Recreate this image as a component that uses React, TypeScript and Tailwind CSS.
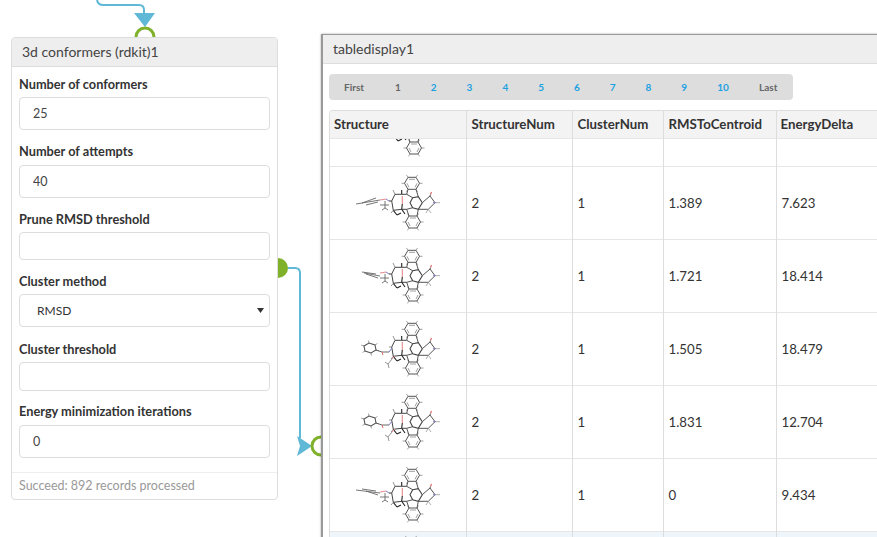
const fields = [
  { label: 'Number of conformers', value: '25', box: 'mt-[3px] h-[33px]', gap: 'mt-0' },
  { label: 'Number of attempts', value: '40', box: 'mt-[4px] h-[33px]', gap: 'mt-[11px]' },
  { label: 'Prune RMSD threshold', value: '', box: 'mt-[3px] h-[28px]', gap: 'mt-[11px]' },
];
const fieldsAfter = [
  { label: 'Cluster threshold', value: '', box: 'mt-[3px] h-[29px]', gap: 'mt-[12px]' },
  { label: 'Energy minimization iterations', value: '0', box: 'mt-[4px] h-[33px]', gap: 'mt-[10px]' },
];
const pages = ['1', '2', '3', '4', '5', '6', '7', '8', '9'];
const rows = [
  { rms: '1.389', delta: '7.623', tail: 'edge' },
  { rms: '1.721', delta: '18.414', tail: 'edgeUp' },
  { rms: '1.505', delta: '18.479', tail: 'ring' },
  { rms: '1.831', delta: '12.704', tail: 'ringLow' },
  { rms: '0', delta: '9.434', tail: 'flat' },
];

function Benzene({ x, y }: { x: number; y: number }) {
  const pts = [[-4, -6], [4, -6], [7.5, 0], [4, 6], [-4, 6], [-7.5, 0]];
  const d = pts.map((p, i) => `${i ? 'L' : 'M'}${x + p[0]} ${y + p[1]}`).join(' ') + ' Z';
  const h = pts.map(p => `M${x + p[0]} ${y + p[1]} L${x + p[0] * 1.4} ${y + p[1] * 1.4}`).join(' ');
  return (
    <g>
      <path d={h} stroke="#8c8c8c" strokeWidth="0.8" fill="none" />
      <path d={d} stroke="#555" strokeWidth="1" fill="none" />
      <path d={`M${x - 3} ${y - 4} L${x + 3} ${y - 4} M${x + 5} ${y} L${x + 3} ${y + 4} M${x - 5} ${y} L${x - 3} ${y + 4}`} stroke="#777" strokeWidth="0.7" fill="none" />
    </g>
  );
}

function SmallRing({ x, y }: { x: number; y: number }) {
  const pts = [[-6, -2], [-1, -5], [5, -3], [6, 2], [1, 5], [-5, 3]];
  const d = pts.map((p, i) => `${i ? 'L' : 'M'}${x + p[0]} ${y + p[1]}`).join(' ') + ' Z';
  const h = pts.map(p => `M${x + p[0]} ${y + p[1]} L${x + p[0] * 1.5} ${y + p[1] * 1.5}`).join(' ');
  return (
    <g>
      <path d={h} stroke="#8c8c8c" strokeWidth="0.8" fill="none" />
      <path d={d} stroke="#555" strokeWidth="1.1" fill="none" />
    </g>
  );
}

function Tail({ kind }: { kind: string }) {
  if (kind === 'ring' || kind === 'ringLow') {
    return (
      <g>
        <SmallRing x={-28} y={-2} />
        <path d="M-22 0 L-16 2 L-9 2" stroke="#555" strokeWidth="0.9" fill="none" />
        <path d="M-16 2 L-15 5" stroke="#e06a6a" strokeWidth="1" fill="none" />
        <path d="M-9 2 L-6 -2" stroke="#7c7cc8" strokeWidth="1" fill="none" />
        <path d="M-6 9 L-10 14 M-10 14 L-13 12 M-10 14 L-9 18" stroke="#777" strokeWidth="0.8" fill="none" />
        <path d="M-3 6 L-6 9" stroke="#e58a8a" strokeWidth="1" fill="none" />
      </g>
    );
  }
  const y = kind === 'edgeUp' ? 0 : kind === 'flat' ? -2 : -3;
  const end = kind === 'edgeUp' ? -4 : kind === 'flat' ? -4 : 3;
  return (
    <g>
      <path d={`M${kind === 'edgeUp' ? -34 : -42} ${y + end} L-18 ${y - 1} M-36 ${y + end - 1} L-22 ${y - 3} M-32 ${y + end + 1} L-20 ${y + 1}`} stroke="#666" strokeWidth="0.9" fill="none" />
      <path d="M-18 -4 L-12 -5" stroke="#e58a8a" strokeWidth="1" fill="none" />
      <path d="M-12 -5 L-9 -3" stroke="#7c7cc8" strokeWidth="1" fill="none" />
      <path d="M-9 -3 L-6 -3 M-13 -3 L-13 4 M-18 1 L-9 1 M-13 4 L-16 6 M-13 4 L-10 6" stroke="#555" strokeWidth="0.8" fill="none" />
    </g>
  );
}

function Molecule({ tail }: { tail: string }) {
  return (
    <svg width="110" height="72" viewBox="-55 -36 110 72" className="block">
      <Benzene x={14} y={-20.7} />
      <Benzene x={15} y={18} />
      {/* fused core */}
      <path d="M8.7 -9.7 L10 -14.7 M18 -14.7 L20.3 -7.3 M8.7 -9.7 L14.7 -6.3 M8.7 5.3 L14.7 3.7 M8.7 5.3 L11 12 M19 12 L20.3 5.3" stroke="#555" strokeWidth="1" fill="none" />
      <path d="M14.7 -6.3 L20.3 -7.3 L24.3 -1.3 L20.3 5.3 L14.7 3.7 L12 -1.3 Z" stroke="#444" strokeWidth="1.1" fill="none" />
      <path d="M24.3 -1.3 L32 -8 L37 -1.3 L30.3 5.3 L20.3 5.3 M32 -8 L32.5 -9.5" stroke="#555" strokeWidth="1" fill="none" />
      <path d="M32.5 -9.5 L33.5 -12" stroke="#e06a6a" strokeWidth="1.2" fill="none" />
      <path d="M35 -1.3 L38 -1.3" stroke="#7c7cc8" strokeWidth="1" fill="none" />
      <path d="M38 -1.3 L42 -1.3 M30.3 5.3 L33 9 M30.3 5.3 L28 9" stroke="#999" strokeWidth="0.8" fill="none" />
      {/* sugar bridge */}
      <path d="M8.7 -9.7 L3.7 -9.7 L-3 -9.7 L-6.3 -3 L-4.7 6.3 L3.7 5.3 L8.7 5.3" stroke="#444" strokeWidth="1" fill="none" />
      <path d="M4.3 -8 L4.3 0" stroke="#e58a8a" strokeWidth="1.1" fill="none" />
      <path d="M3.7 5.3 L4.3 0 M3.7 -9.7 L3.7 -14 M-4.7 6.3 L-1 11 M-1 11 L3 9 M3.7 5.3 L7 10" stroke="#222" strokeWidth="1.1" fill="none" />
      <path d="M-3 -9.7 L-5 -14 M-6.3 -3 L-9 -3 M-4.7 6.3 L-7 9" stroke="#777" strokeWidth="0.8" fill="none" />
      <Tail kind={tail} />
    </svg>
  );
}

function Field({ label, value, box, gap }: { label: string; value: string; box: string; gap: string }) {
  return (
    <div className={gap}>
      <div className="h-[20px] text-[12.75px] leading-[20px] font-bold text-[#333]">{label}</div>
      <input
        readOnly
        value={value}
        className={`${box} block w-full rounded-[4px] border border-[#ddd] bg-white pl-[13px] text-[12.5px] text-[#444] outline-none`}
      />
    </div>
  );
}

export default function App() {
  return (
    <div className="relative h-[537px] w-[877px] overflow-hidden bg-white font-['Lato','Noto_Sans',sans-serif] text-[#333]">
      <svg width="877" height="537" className="absolute inset-0">
        <path d="M97 0 Q98 5 103 5 L139 5 Q144 5 144 10 L144 16" stroke="#5fb8d6" strokeWidth="2" fill="none" />
        <path d="M134 13 L155 13 L145 27 Z" fill="#5fb8d6" />
        <circle cx="145" cy="37" r="9" stroke="#7fb12a" strokeWidth="3" fill="white" />
        <path d="M278 258 A10 10 0 0 1 278 278 Z" fill="#7fb12a" />
        <path d="M288 268 L295 268 Q300 268 300 273 L300 438" stroke="#5fb8d6" strokeWidth="2" fill="none" />
        <path d="M297 436 L312 446 L297 456 L300 446 Z" fill="#5fb8d6" />
        <circle cx="321" cy="446" r="9" stroke="#7fb12a" strokeWidth="3" fill="white" />
      </svg>

      {/* conformers node */}
      <div className="absolute left-[11px] top-[37px] w-[267px] h-[463px] rounded-[4px] border border-[#ddd] bg-white flex flex-col">
        <div className="h-[29px] shrink-0 rounded-t-[4px] border-b border-[#ddd] bg-[#eee] pl-[10px] text-[14px] leading-[28px] text-[#444]">
          3d conformers (rdkit)1
        </div>
        <div className="flex-1 px-[7px] pt-[7px]">
          {fields.map(f => <Field key={f.label} {...f} />)}
          <div className="mt-[11px]">
            <div className="h-[20px] text-[12.75px] leading-[20px] font-bold text-[#333]">Cluster method</div>
            <div className="relative mt-[3px]">
              <select
                defaultValue="RMSD"
                className="block h-[33px] w-full appearance-none rounded-[4px] border border-[#ddd] bg-white pl-[17px] text-[12px] text-[#333] outline-none"
              >
                <option>RMSD</option>
              </select>
              <svg width="7" height="5" viewBox="0 0 7 5" className="absolute right-[6px] top-[14px]">
                <path d="M0 0 L7 0 L3.5 5 Z" fill="#333" />
              </svg>
            </div>
          </div>
          {fieldsAfter.map(f => <Field key={f.label} {...f} />)}
        </div>
        <div className="h-[27px] shrink-0 border-t border-[#eee] pl-[7px] text-[12.5px] leading-[26px] text-[#999]">
          Succeed: 892 records processed
        </div>
      </div>

      {/* table node */}
      <div className="absolute left-[321px] top-[34px] w-[600px] h-[540px] border-l-2 border-t border-[#999] bg-white shadow-[0_0_2px_rgba(0,0,0,0.35)]">
        <div className="h-[29px] border-b border-[#ddd] bg-[#eee] pl-[10px] text-[14px] leading-[28px] text-[#444]">
          tabledisplay1
        </div>
        <div className="ml-[6px] mt-[10px] flex h-[26px] w-[464px] items-center rounded-[4px] bg-[#ddd] text-[10px] font-bold">
          <span className="ml-[15px] w-[36px] text-[#666]">First</span>
          {pages.map((p, i) => (
            <span key={p} className={`w-[35.8px] text-center ${i === 0 ? 'text-[#666]' : 'text-[#1ba1e2]'}`}>{p}</span>
          ))}
          <span className="ml-[3px] w-[35.8px] text-center text-[#1ba1e2]">10</span>
          <span className="ml-[18px] text-[#666]">Last</span>
        </div>
        <div className="ml-[6px] mt-[10px] w-[600px] h-[430px] overflow-hidden rounded-tl-[4px] border-l border-t border-[#ddd]">
          <table className="table-fixed border-collapse w-[547px]">
            <colgroup>
              <col className="w-[136px]" />
              <col className="w-[106px]" />
              <col className="w-[91px]" />
              <col className="w-[113px]" />
              <col className="w-[101px]" />
            </colgroup>
            <thead>
              <tr className="h-[27px] bg-[#f3f3f3] text-left text-[13.25px] text-[#333]">
                <th className="border-r border-[#ddd] pl-[4px] pt-[1px] font-bold">Structure</th>
                <th className="border-r border-[#ddd] pl-[5px] pt-[1px] font-bold">StructureNum</th>
                <th className="border-r border-[#ddd] pl-[5px] pt-[1px] font-bold">ClusterNum</th>
                <th className="border-r border-[#ddd] pl-[5px] pt-[1px] font-bold">RMSToCentroid</th>
                <th className="border-r border-[#ddd] pl-[4px] pt-[1px] font-bold">EnergyDelta</th>
              </tr>
            </thead>
            <tbody className="text-[13.25px]">
              <tr className="h-[28px] border-b border-t border-[#e6e6e6]">
                <td className="border-r border-[#ddd] p-0">
                  <div className="relative h-[27px] overflow-hidden">
                    <div className="absolute left-[14px] -top-[45px]"><Molecule tail="flat" /></div>
                  </div>
                </td>
                <td className="border-r border-[#ddd]" />
                <td className="border-r border-[#ddd]" />
                <td className="border-r border-[#ddd]" />
                <td className="border-r border-[#ddd]" />
              </tr>
              {rows.map(r => (
                <tr key={r.rms} className="h-[73px] border-b border-[#e6e6e6]">
                  <td className="border-r border-[#ddd] p-0">
                    <div className="flex h-[72px] justify-center overflow-hidden pt-[1px]"><Molecule tail={r.tail} /></div>
                  </td>
                  <td className="border-r border-[#ddd] pl-[5px] pt-[2px]">2</td>
                  <td className="border-r border-[#ddd] pl-[5px] pt-[2px]">1</td>
                  <td className="border-r border-[#ddd] pl-[5px] pt-[2px]">{r.rms}</td>
                  <td className="border-r border-[#ddd] pl-[5px] pt-[2px]">{r.delta}</td>
                </tr>
              ))}
              <tr className="h-[30px] bg-[#eef5fb]">
                <td className="border-r border-[#ddd] p-0">
                  <div className="relative h-[29px] overflow-hidden">
                    <div className="absolute left-[12px] -top-[3px]"><Molecule tail="flat" /></div>
                  </div>
                </td>
                <td className="border-r border-[#ddd]" />
                <td className="border-r border-[#ddd]" />
                <td className="border-r border-[#ddd]" />
                <td className="border-r border-[#ddd]" />
              </tr>
            </tbody>
          </table>
        </div>
      </div>
    </div>
  );
}
